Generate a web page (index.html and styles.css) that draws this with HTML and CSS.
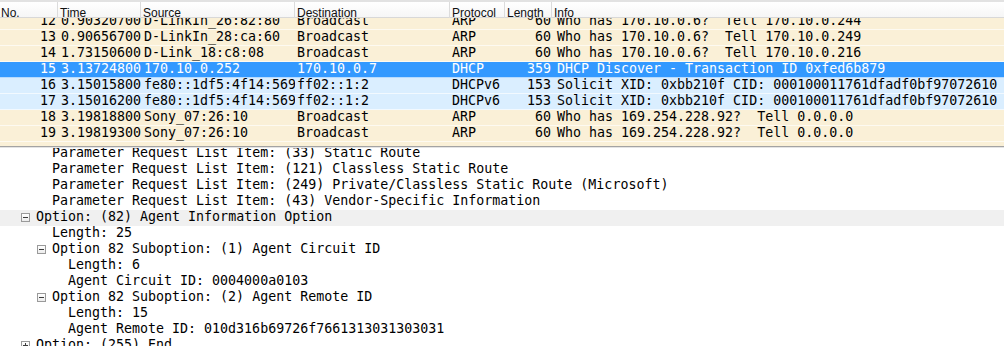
FILE: index.html
```html
<!DOCTYPE html>
<html lang="en">
<head>
  <meta charset="UTF-8">
  <title>Packet capture - DHCP</title>
  <link rel="stylesheet" href="styles.css">
</head>
<body>

  <div class="packet-list">
    <div class="list-header">
      <div class="hcell first">No.</div>
      <div class="hcell">Time</div>
      <div class="hcell">Source</div>
      <div class="hcell">Destination</div>
      <div class="hcell">Protocol</div>
      <div class="hcell">Length</div>
      <div class="hcell last">Info</div>
    </div>

    <div class="list-view">
      <div class="rows">
        <div class="row arp">
          <span class="num">12</span><span class="time">0.90320700</span><span class="src">D-LinkIn_26:82:80</span><span class="dst">Broadcast</span><span class="proto">ARP</span><span class="len">60</span><span class="info">Who has 170.10.0.6?  Tell 170.10.0.244</span>
        </div>
        <div class="row arp">
          <span class="num">13</span><span class="time">0.90656700</span><span class="src">D-LinkIn_28:ca:60</span><span class="dst">Broadcast</span><span class="proto">ARP</span><span class="len">60</span><span class="info">Who has 170.10.0.6?  Tell 170.10.0.249</span>
        </div>
        <div class="row arp">
          <span class="num">14</span><span class="time">1.73150600</span><span class="src">D-Link_18:c8:08</span><span class="dst">Broadcast</span><span class="proto">ARP</span><span class="len">60</span><span class="info">Who has 170.10.0.6?  Tell 170.10.0.216</span>
        </div>
        <div class="row selected">
          <span class="num">15</span><span class="time">3.13724800</span><span class="src">170.10.0.252</span><span class="dst">170.10.0.7</span><span class="proto">DHCP</span><span class="len">359</span><span class="info">DHCP Discover - Transaction ID 0xfed6b879</span>
        </div>
        <div class="row udp">
          <span class="num">16</span><span class="time">3.15015800</span><span class="src">fe80::1df5:4f14:5698:bd2e</span><span class="dst">ff02::1:2</span><span class="proto">DHCPv6</span><span class="len">153</span><span class="info">Solicit XID: 0xbb210f CID: 000100011761dfadf0bf97072610</span>
        </div>
        <div class="row udp">
          <span class="num">17</span><span class="time">3.15016200</span><span class="src">fe80::1df5:4f14:5698:bd2e</span><span class="dst">ff02::1:2</span><span class="proto">DHCPv6</span><span class="len">153</span><span class="info">Solicit XID: 0xbb210f CID: 000100011761dfadf0bf97072610</span>
        </div>
        <div class="row arp">
          <span class="num">18</span><span class="time">3.19818800</span><span class="src">Sony_07:26:10</span><span class="dst">Broadcast</span><span class="proto">ARP</span><span class="len">60</span><span class="info">Who has 169.254.228.92?  Tell 0.0.0.0</span>
        </div>
        <div class="row arp">
          <span class="num">19</span><span class="time">3.19819300</span><span class="src">Sony_07:26:10</span><span class="dst">Broadcast</span><span class="proto">ARP</span><span class="len">60</span><span class="info">Who has 169.254.228.92?  Tell 0.0.0.0</span>
        </div>
        <div class="row arp"></div>
      </div>
    </div>
  </div>

  <div class="splitter"></div>

  <div class="detail-view">
    <div class="tree">
      <div class="node l2">Parameter Request List Item: (33) Static Route</div>
      <div class="node l2">Parameter Request List Item: (121) Classless Static Route</div>
      <div class="node l2">Parameter Request List Item: (249) Private/Classless Static Route (Microsoft)</div>
      <div class="node l2">Parameter Request List Item: (43) Vendor-Specific Information</div>
      <div class="node l1 current"><span class="expander open"></span>Option: (82) Agent Information Option</div>
      <div class="node l2">Length: 25</div>
      <div class="node l2"><span class="expander open"></span>Option 82 Suboption: (1) Agent Circuit ID</div>
      <div class="node l3">Length: 6</div>
      <div class="node l3">Agent Circuit ID: 0004000a0103</div>
      <div class="node l2"><span class="expander open"></span>Option 82 Suboption: (2) Agent Remote ID</div>
      <div class="node l3">Length: 15</div>
      <div class="node l3">Agent Remote ID: 010d316b69726f7661313031303031</div>
      <div class="node l1"><span class="expander"></span>Option: (255) End</div>
    </div>
  </div>

</body>
</html>
```

FILE: styles.css
```css
* { box-sizing: border-box; }
body {
  margin: 0;
  background: #fff;
  color: #000;
  font-family: 'DejaVu Sans Mono', 'Liberation Mono', monospace;
  font-size: 13.3px;
}

/* packet list */
.list-header,
.row {
  display: grid;
  grid-template-columns: 58px 83px 154px 155px 55px 47px 1fr;
}
.list-header {
  height: 18px;
  border-top: 2px solid #e2e2e2;
  border-bottom: 1px solid #d8d8d8;
  background: linear-gradient(#ffffff, #f6f6f6);
  font-family: 'Liberation Sans', Arial, sans-serif;
  font-size: 12px;
  color: #111;
}
.hcell {
  padding: 6px 0 0 2px;
  line-height: 10px;
  border-right: 1px solid #dcdcdc;
  white-space: nowrap;
}
.hcell.first { padding-left: 1px; }
.hcell.last { border-right: none; }

.list-view {
  height: 128px;
  overflow: hidden;
}
.rows { margin-top: -4px; }
.row {
  height: 16px;
  line-height: 14px;
  padding-bottom: 1px;
  border-bottom: 1px solid rgba(255, 255, 255, 0.65);
}
.row span {
  white-space: pre;
  overflow-x: clip;
  overflow-y: visible;
}
.row .num { text-align: right; padding-right: 2px; }
.row .time,
.row .src { padding-left: 3px; }
.row .dst,
.row .proto { padding-left: 2px; }
.row .len { text-align: right; padding-right: 1px; }
.row .info { padding-left: 5px; }

.arp { background: #faf0d7; }
.udp { background: #daeeff; }
.selected {
  background: #3399ff;
  color: #fff;
}

.splitter {
  height: 2px;
  border-top: 1px solid #a3a3a3;
  background: #e4e4e4;
}

/* packet details */
.detail-view {
  height: 198px;
  overflow: hidden;
}
.tree { margin-top: -2px; }
.node {
  display: flex;
  align-items: flex-start;
  height: 16px;
  line-height: 14px;
  padding-bottom: 2px;
  white-space: pre;
}
.node.l1 { padding-left: 36px; }
.node.l2 { padding-left: 52px; }
.node.l3 { padding-left: 68px; }
.node.current { background: #f0f0f0; }

.expander {
  position: relative;
  flex: none;
  width: 9px;
  height: 9px;
  margin: 3px 6px 0 -15px;
  border: 1px solid #9a9a9a;
  background: linear-gradient(#ffffff, #ececec);
}
.expander::before {
  content: '';
  position: absolute;
  left: 1px;
  top: 3px;
  width: 5px;
  height: 1px;
  background: #3c3c3c;
}
.expander:not(.open)::after {
  content: '';
  position: absolute;
  left: 3px;
  top: 1px;
  width: 1px;
  height: 5px;
  background: #3c3c3c;
}
```
